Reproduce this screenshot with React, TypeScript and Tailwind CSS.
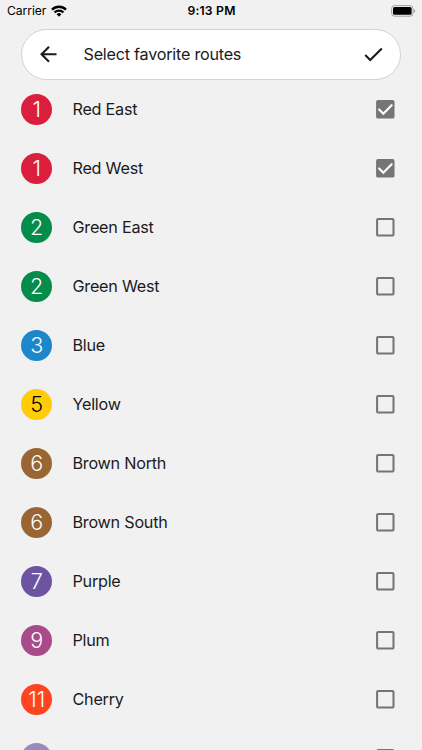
import { useState } from 'react';
import { MdArrowBack, MdCheck, MdCheckBoxOutlineBlank } from 'react-icons/md';

type Route = { id: string; num: string; name: string; badge: string };

const ROUTES: Route[] = [
  { id: 'red-east', num: '1', name: 'Red East', badge: 'bg-[#dc1e3e] text-white' },
  { id: 'red-west', num: '1', name: 'Red West', badge: 'bg-[#dc1e3e] text-white' },
  { id: 'green-east', num: '2', name: 'Green East', badge: 'bg-[#048c4b] text-white' },
  { id: 'green-west', num: '2', name: 'Green West', badge: 'bg-[#048c4b] text-white' },
  { id: 'blue', num: '3', name: 'Blue', badge: 'bg-[#1c87cb] text-white' },
  { id: 'yellow', num: '5', name: 'Yellow', badge: 'bg-[#ffcd07] text-black' },
  { id: 'brown-north', num: '6', name: 'Brown North', badge: 'bg-[#996633] text-white' },
  { id: 'brown-south', num: '6', name: 'Brown South', badge: 'bg-[#996633] text-white' },
  { id: 'purple', num: '7', name: 'Purple', badge: 'bg-[#6c54a3] text-white' },
  { id: 'plum', num: '9', name: 'Plum', badge: 'bg-[#a94a8a] text-white' },
  { id: 'cherry', num: '11', name: 'Cherry', badge: 'bg-[#ff4422] text-white' },
  { id: 'lavender', num: '', name: '', badge: 'bg-[#988bbd] text-white' },
];

function StatusBar() {
  return (
    <div className="grid h-[22px] grid-cols-3 items-center pl-[7px] pr-[6px] text-black">
      <div className="flex items-center gap-[4.5px]">
        <span className="text-[12.2px] leading-none tracking-[-0.1px]">Carrier</span>
        <svg width="16" height="12" viewBox="0 0 16 12" fill="none" stroke="currentColor" strokeWidth="2.4">
          <path d="M1 4.6a10 10 0 0 1 14 0" />
          <path d="M3.6 7.5a6.2 6.2 0 0 1 8.8 0" />
          <path d="M8 11.7 5.6 9.3a3.4 3.4 0 0 1 4.8 0Z" fill="currentColor" stroke="none" />
        </svg>
      </div>
      <span className="text-center text-[12.2px] font-semibold leading-none tracking-[0.2px]">9:13 PM</span>
      <svg className="justify-self-end" width="25" height="12" viewBox="0 0 25 12">
        <rect x="0.6" y="0.6" width="21.4" height="10.6" rx="3" fill="none" stroke="#a0a0a0" />
        <rect x="2" y="2" width="18.6" height="7.8" rx="1.6" fill="#000" />
        <path d="M23.2 4.2c1.4.5 1.4 3 0 3.5Z" fill="#8c8c8c" />
      </svg>
    </div>
  );
}

function CheckedBox() {
  return (
    <svg className="size-[24.6px]" viewBox="0 0 24 24">
      <rect x="3" y="3" width="18" height="18" rx="1.8" fill="currentColor" />
      <path d="m6 12.2 4.1 4.1L18.2 8" fill="none" stroke="#fff" strokeWidth="2.1" strokeLinecap="round" />
    </svg>
  );
}

export default function App() {
  const [selected, setSelected] = useState<string[]>(['red-east', 'red-west']);

  const toggle = (id: string) =>
    setSelected(s => (s.includes(id) ? s.filter(x => x !== id) : [...s, id]));

  return (
    <div className="h-[750px] w-[422px] overflow-hidden bg-[#f1f1f1] font-['Inter',sans-serif] text-[#1b1b1d]">
      <StatusBar />

      <header className="ml-[21.4px] mt-[7px] flex h-[50.6px] w-[379.4px] items-center rounded-full border border-[#d2d2d2] bg-white pl-[13.5px] pr-[14.6px]">
        <button aria-label="Back"><MdArrowBack className="size-[24.6px]" /></button>
        <h1 className="ml-[23px] flex-1 text-[16.2px] leading-none tracking-[-0.24px]">Select favorite routes</h1>
        <button aria-label="Done"><MdCheck className="size-[24.6px]" /></button>
      </header>

      <ul>
        {ROUTES.map(r => (
          <li key={r.id} className="flex h-[59.06px] items-center pl-[21.3px] pr-[24.6px]">
            <span className={`flex size-[30.8px] items-center justify-center rounded-full pt-px text-[21.5px] font-[350] leading-none ${r.badge}`}>{r.num}</span>
            <span className="ml-[20.4px] flex-1 text-[16.2px] leading-none tracking-[-0.24px]">{r.name}</span>
            <button className="text-[#757575]" aria-label={r.name} onClick={() => toggle(r.id)}>
              {selected.includes(r.id)
                ? <CheckedBox />
                : <MdCheckBoxOutlineBlank className="size-[24.6px]" />}
            </button>
          </li>
        ))}
      </ul>
    </div>
  );
}
